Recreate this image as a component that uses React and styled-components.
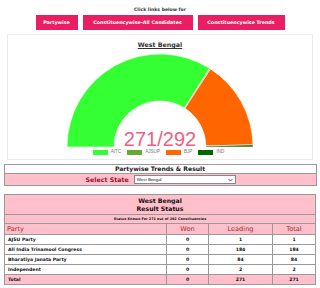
import React from "react"
import styled, { createGlobalStyle } from "styled-components"

const GlobalStyle = createGlobalStyle`
  html, body {
    margin: 0;
    padding: 0;
    background: #fff;
    font-family: "DejaVu Sans", Verdana, sans-serif;
  }
`

const Page = styled.div`
  width: 320px;
  height: 288px;
  overflow: hidden;
  display: flex;
  flex-direction: column;
  align-items: center;
`

const Intro = styled.div`
  margin-top: 7px;
  font-size: 4.6px;
  font-weight: bold;
  color: #333;
  line-height: 6px;
`

const LinkRow = styled.div`
  display: flex;
  gap: 5px;
  margin-top: 2px;
`

const LinkButton = styled.a`
  display: flex;
  align-items: center;
  justify-content: center;
  height: 15px;
  width: ${p => p.$w}px;
  background: #e91e63;
  color: #fff;
  font-size: 4.8px;
  font-weight: bold;
  text-decoration: none;
`

const ChartPanel = styled.div`
  box-sizing: border-box;
  width: 306px;
  height: 126px;
  margin-top: 4px;
  border: 1px solid #ececec;
  display: flex;
  flex-direction: column;
  align-items: center;
`

const ChartTitle = styled.div`
  margin-top: 6px;
  font-size: 6.3px;
  font-weight: bold;
  color: #333;
  text-decoration: underline;
  line-height: 8px;
`

const Gauge = styled.svg`
  display: block;
  margin-top: 3px;
  overflow: visible;
`

const Legend = styled.div`
  display: flex;
  gap: 3px;
  margin-top: 1px;
  height: 6px;
  align-items: center;
  font-family: "Liberation Sans", Arial, sans-serif;
  font-size: 4.6px;
  line-height: 6px;
  color: #777;
`

const LegendItem = styled.div`
  display: flex;
  align-items: center;
  gap: 3px;
  margin-right: 3px;
`

const Swatch = styled.span`
  display: inline-block;
  width: 15px;
  height: 5px;
  background: ${p => p.$color};
`

const TrendsBox = styled.div`
  box-sizing: border-box;
  width: 313px;
  margin-top: 4px;
  border: 1px solid #999;
`

const TrendsTitle = styled.div`
  height: 8px;
  line-height: 8px;
  text-align: center;
  font-size: 6.1px;
  font-weight: bold;
  color: #222;
  border-bottom: 1px solid #999;
`

const SelectRow = styled.div`
  height: 11px;
  background: #ffc0cb;
  display: flex;
  align-items: center;
  padding-left: 81px;
  gap: 5px;
`

const SelectLabel = styled.span`
  font-size: 6.3px;
  font-weight: bold;
  color: #a0102a;
`

const FakeSelect = styled.div`
  box-sizing: border-box;
  width: 102px;
  height: 9px;
  background: #fff;
  border: 1px solid #888;
  display: flex;
  align-items: center;
  justify-content: space-between;
  padding: 0 2px 0 2px;
  font-family: "Liberation Sans", Arial, sans-serif;
  font-size: 4.4px;
  color: #111;
`

const ResultTable = styled.table`
  width: 312px;
  margin-top: 8px;
  border-collapse: collapse;
  border: 1px solid #888;
  font-size: 4.6px;
  color: #111;
`

const HeadCell = styled.td`
  background: #ffc0cb;
  border: 1px solid #999;
  text-align: center;
  font-weight: bold;
  padding: 0;
  height: ${p => p.$h}px;
  font-size: ${p => p.$size}px;
  line-height: ${p => p.$lh || p.$h}px;
`

const ColHead = styled.td`
  background: #ffc0cb;
  border: 1px solid #999;
  color: #a52a2a;
  font-size: 6.6px;
  height: 10px;
  padding: 0 2px;
  text-align: ${p => (p.$left ? "left" : "center")};
  width: ${p => p.$w}px;
`

const Cell = styled.td`
  background: ${p => (p.$total ? "#ffc0cb" : "#fff")};
  border: 1px solid #999;
  font-weight: bold;
  height: 9px;
  padding: 0 3px;
  text-align: ${p => (p.$left ? "left" : "center")};
`

const slices = [
  { label: "AITC", value: 184, color: "#33ff33" },
  { label: "AJSUP", value: 1, color: "#66aa33" },
  { label: "BJP", value: 84, color: "#ff6600" },
  { label: "IND", value: 2, color: "#006600" },
]

const rows = [
  ["AJSU Party", 0, 1, 1],
  ["All India Trinamool Congress", 0, 184, 184],
  ["Bharatiya Janata Party", 0, 84, 84],
  ["Independent", 0, 2, 2],
]

function arcPath(cx, cy, r0, r1, a0, a1) {
  const p = (r, a) => [cx + r * Math.cos(a), cy - r * Math.sin(a)]
  const [x0, y0] = p(r1, a0)
  const [x1, y1] = p(r1, a1)
  const [x2, y2] = p(r0, a1)
  const [x3, y3] = p(r0, a0)
  return `M${x0} ${y0} A${r1} ${r1} 0 0 1 ${x1} ${y1} L${x2} ${y2} A${r0} ${r0} 0 0 0 ${x3} ${y3} Z`
}

function GaugeChart() {
  const total = slices.reduce((s, d) => s + d.value, 0)
  let a = Math.PI
  const cx = 100
  const cy = 95
  return (
    <Gauge width="200" height="96" viewBox="0 0 200 96">
      {slices.map(s => {
        const a1 = a - (s.value / total) * Math.PI
        const d = arcPath(cx, cy, 46, 93, a, a1)
        a = a1
        return <path key={s.label} d={d} fill={s.color} stroke="#fff" strokeWidth="0.6" />
      })}
      <text
        x={cx}
        y={cy - 1}
        textAnchor="middle"
        fill="#f06080"
        fontSize="20"
        fontFamily="Liberation Sans, Arial, sans-serif"
      >
        271/292
      </text>
    </Gauge>
  )
}

export default function App() {
  return (
    <Page>
      <GlobalStyle />
      <Intro>Click links below for</Intro>
      <LinkRow>
        <LinkButton $w={42}>Partywise</LinkButton>
        <LinkButton $w={110}>Constituencywise-All Candidates</LinkButton>
        <LinkButton $w={87}>Constituencywise Trends</LinkButton>
      </LinkRow>
      <ChartPanel>
        <ChartTitle>West Bengal</ChartTitle>
        <GaugeChart />
        <Legend>
          {slices.map(s => (
            <LegendItem key={s.label}>
              <Swatch $color={s.color} />
              {s.label}
            </LegendItem>
          ))}
        </Legend>
      </ChartPanel>
      <TrendsBox>
        <TrendsTitle>Partywise Trends &amp; Result</TrendsTitle>
        <SelectRow>
          <SelectLabel>Select State</SelectLabel>
          <FakeSelect>
            <span>West Bengal</span>
            <svg width="5" height="4" viewBox="0 0 10 6">
              <path d="M1 1 L5 5 L9 1" fill="none" stroke="#333" strokeWidth="1.6" />
            </svg>
          </FakeSelect>
        </SelectRow>
      </TrendsBox>
      <ResultTable>
        <tbody>
          <tr>
            <HeadCell colSpan={4} $h={19} $lh={8} $size={6.2}>
              West Bengal
              <br />
              Result Status
            </HeadCell>
          </tr>
          <tr>
            <HeadCell colSpan={4} $h={8} $size={3.4}>
              Status Known For 271 out of 292 Constituencies
            </HeadCell>
          </tr>
          <tr>
            <ColHead $left $w={157}>Party</ColHead>
            <ColHead $w={37}>Won</ColHead>
            <ColHead $w={59}>Leading</ColHead>
            <ColHead>Total</ColHead>
          </tr>
          {rows.map(r => (
            <tr key={r[0]}>
              <Cell $left>{r[0]}</Cell>
              <Cell>{r[1]}</Cell>
              <Cell>{r[2]}</Cell>
              <Cell>{r[3]}</Cell>
            </tr>
          ))}
          <tr>
            <Cell $left $total>Total</Cell>
            <Cell $total>0</Cell>
            <Cell $total>271</Cell>
            <Cell $total>271</Cell>
          </tr>
        </tbody>
      </ResultTable>
    </Page>
  )
}
